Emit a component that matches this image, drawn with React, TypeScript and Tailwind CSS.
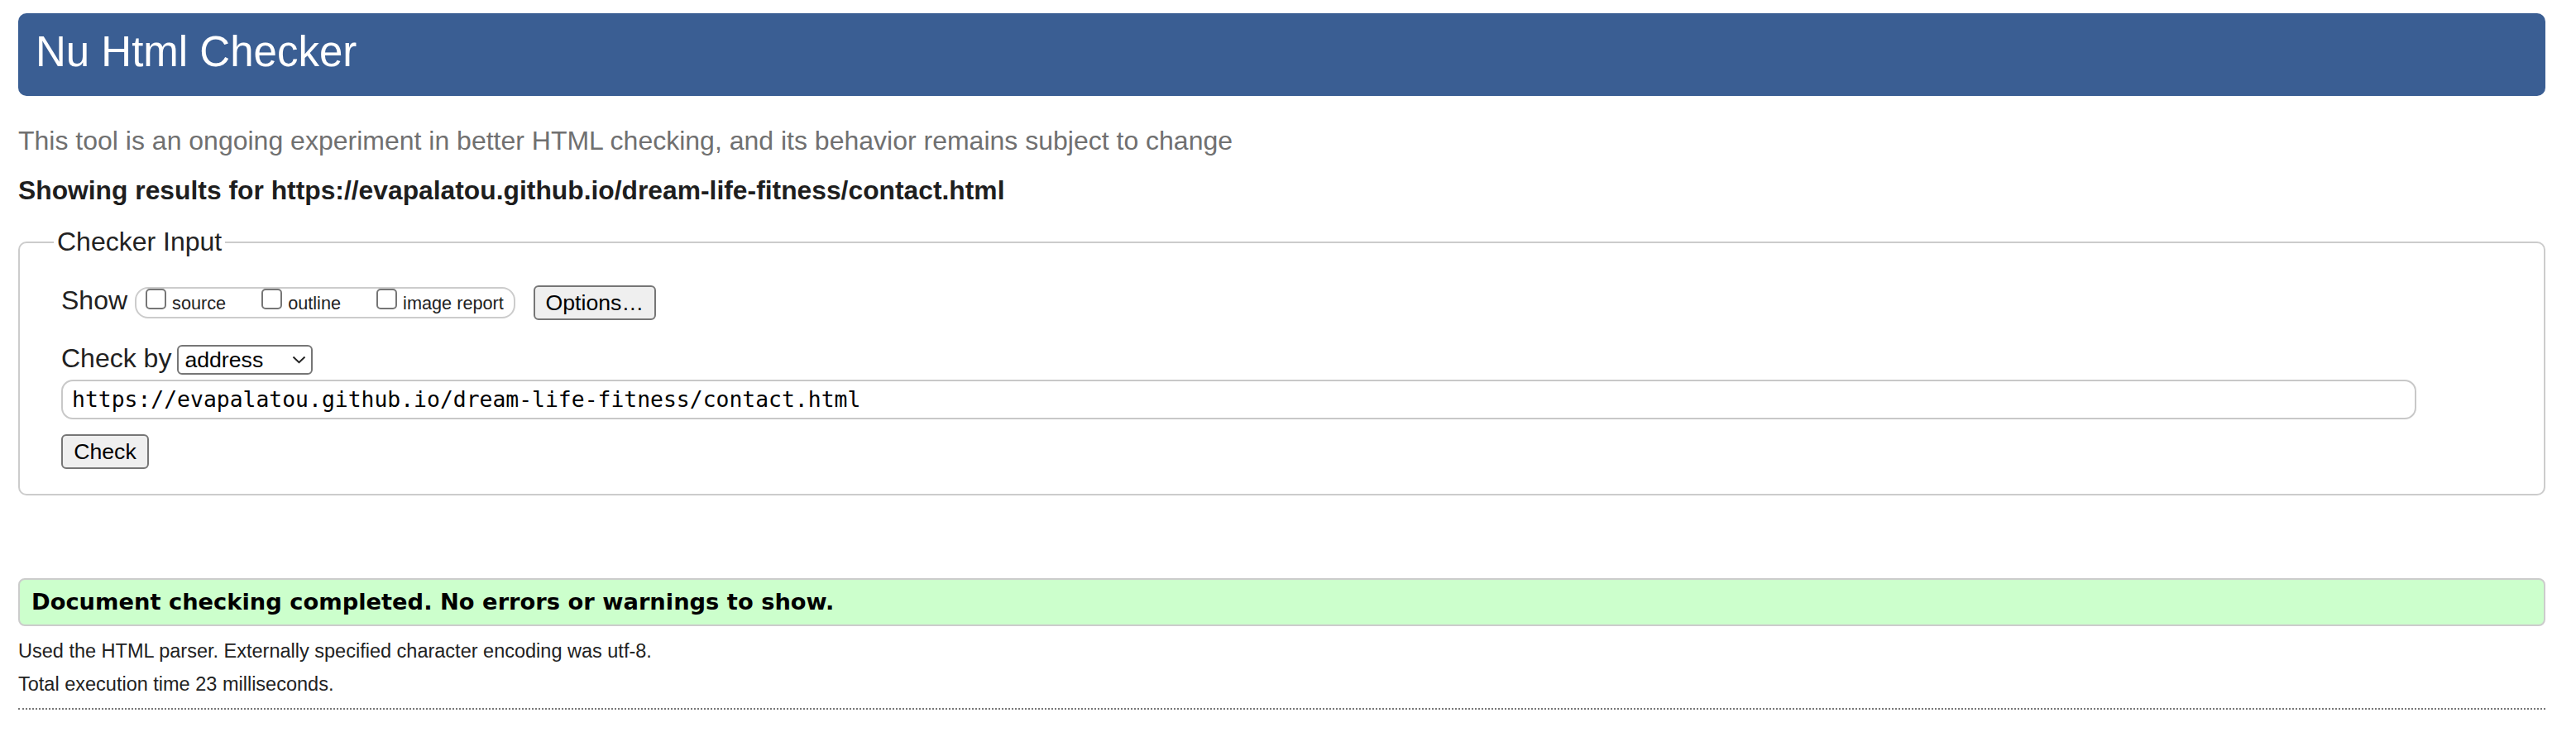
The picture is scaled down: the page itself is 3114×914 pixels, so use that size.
import React from 'react';

// Nu Html Checker result page, drawn at 2x scale.

function Box() {
  return (
    <span
      className="inline-block h-[25px] w-[25px] shrink-0 rounded-[5px] border-2 border-[#767676] bg-white"
      aria-hidden
    />
  );
}

function Option({ label, first }: { label: string; first?: boolean }) {
  return (
    <span className={`flex items-baseline ${first ? '' : 'ml-[43px]'}`}>
      <Box />
      <span className="ml-[7px] text-[21.7px] text-[#222]">{label}</span>
    </span>
  );
}

function Button({ children, w }: { children: React.ReactNode; w: string }) {
  return (
    <button
      type="button"
      className={`flex h-[42px] ${w} items-center justify-center rounded-[6px] border-2 border-[#767676] bg-[#efefef] text-[26.67px] text-black`}
    >
      {children}
    </button>
  );
}

export default function App() {
  return (
    <div className="min-h-[914px] bg-white pl-[22px] pr-[37px] pt-[16px] font-['Liberation_Sans',Arial,sans-serif] text-[#222]">
      <h1 className="h-[100px] rounded-[10px] bg-[#3a5e93] px-[21px] pt-[18px] text-[51px] leading-[58px] text-white">
        Nu Html Checker
      </h1>

      <p className="mt-[36px] text-[32px] leading-[37px] text-[#707070]">
        This tool is an ongoing experiment in better HTML checking, and its behavior remains
        subject to change
      </p>

      <h2 className="mt-[23px] text-[31.8px] font-bold leading-[37px] text-[#1e1e1e]">
        Showing results for https://evapalatou.github.io/dream-life-fitness/contact.html
      </h2>

      <fieldset className="mt-[25px] rounded-[10px] border-2 border-[#cccccc] pb-[30px] pl-[50px] pr-[50px] pt-[34px]">
        <legend className="-ml-[9px] px-[4px] text-[32px] leading-[37px]">Checker Input</legend>

        <div className="flex h-[42px] items-center">
          <span className="mb-[6px] text-[32px] leading-[37px]">Show</span>
          <div className="ml-[9px] flex h-[38px] items-start rounded-[16px] border-2 border-[#cccccc] pl-[11px] pr-[12px]">
            <Option label="source" first />
            <Option label="outline" />
            <Option label="image report" />
          </div>
          <div className="ml-[22px]">
            <Button w="w-[148px]">Options…</Button>
          </div>
        </div>

        <div className="mt-[30px] flex h-[36px] items-center">
          <span className="mb-[3px] text-[32px] leading-[37px]">Check by</span>
          <div className="ml-[7px] flex h-[36px] w-[164px] items-center justify-between rounded-[6px] border-2 border-[#767676] bg-white pl-[7px] pr-[6px]">
            <span className="text-[26.67px] leading-[30px] text-black">address</span>
            <svg width="17" height="10" viewBox="0 0 17 10" aria-hidden>
              <path d="M1.5 1.5 L8.5 8.2 L15.5 1.5" fill="none" stroke="#222" strokeWidth="2" />
            </svg>
          </div>
        </div>

        <div className="mt-[6px] flex h-[48px] w-[2847px] items-center rounded-[14px] border-2 border-[#c8c8c8] bg-white pl-[11px]">
          <span className="font-['DejaVu_Sans_Mono',monospace] text-[26.4px] text-black">
            https://evapalatou.github.io/dream-life-fitness/contact.html
          </span>
        </div>

        <div className="mt-[18px]">
          <Button w="w-[106px]">Check</Button>
        </div>
      </fieldset>

      <div className="mt-[100px] flex h-[58px] items-center rounded-[8px] border-2 border-[#cccccc] bg-[#ccffcc] pl-[14px]">
        <span className="font-['DejaVu_Sans',sans-serif] text-[27.3px] font-bold text-black">
          Document checking completed. No errors or warnings to show.
        </span>
      </div>

      <p className="mt-[17px] text-[23.5px] leading-[27px]">
        Used the HTML parser. Externally specified character encoding was utf-8.
      </p>
      <p className="mt-[13px] text-[23.5px] leading-[27px]">Total execution time 23 milliseconds.</p>
      <div className="mt-[15px] border-t-2 border-dotted border-[#777777]" />
    </div>
  );
}
